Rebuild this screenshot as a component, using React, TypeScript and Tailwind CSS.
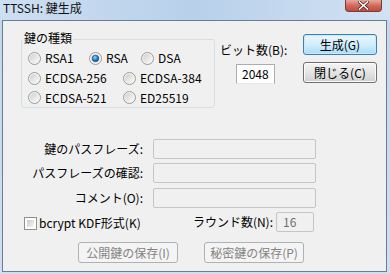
import React from "react";

const FONT = "font-['Noto_Sans_CJK_JP',sans-serif]";

function Radio({ checked }: { checked?: boolean }) {
  return (
    <svg width="13" height="13" viewBox="0 0 13 13" className="shrink-0">
      <defs>
        <linearGradient id="rgbg" x1="0" y1="0" x2="1" y2="1">
          <stop offset="0" stopColor="#cfcfcf" />
          <stop offset="1" stopColor="#fbfbfb" />
        </linearGradient>
        <radialGradient id="rgdot" cx="0.4" cy="0.35" r="0.7">
          <stop offset="0" stopColor="#9fe0ff" />
          <stop offset="0.45" stopColor="#2f8fd8" />
          <stop offset="1" stopColor="#0d3f78" />
        </radialGradient>
      </defs>
      <circle cx="6.5" cy="6.5" r="6" fill="#f4f4f4" stroke="#9a9a9a" strokeWidth="1" />
      <circle cx="6.5" cy="6.5" r="4.5" fill="url(#rgbg)" />
      {checked && <circle cx="6.5" cy="6.5" r="3.3" fill="url(#rgdot)" stroke="#1c4f82" strokeWidth="0.6" />}
    </svg>
  );
}

function Check() {
  return (
    <div className="w-[13px] h-[13px] border border-[#8e8f8f] bg-white p-[2px] shrink-0">
      <div className="w-full h-full bg-gradient-to-br from-[#cbcbcb] to-[#f6f6f6]" />
    </div>
  );
}

function RadioItem({ label, checked, w }: { label: string; checked?: boolean; w: string }) {
  return (
    <div className={`flex items-center gap-[4px] ${w}`}>
      <Radio checked={checked} />
      <span className="leading-[14px]">{label}</span>
    </div>
  );
}

function DisabledInput({ w, text }: { w: string; text?: string }) {
  return (
    <div
      className={`${w} h-[20px] rounded-[2px] border border-[#c5c5c5] bg-[#f0f0f0] flex items-center pl-[6px] text-[#6d6d6d] leading-[14px]`}
    >
      {text}
    </div>
  );
}

export default function App() {
  return (
    <div className={`w-[390px] h-[274px] flex flex-col overflow-hidden bg-gradient-to-b from-[#c3d6ec] to-[#cfdff1] ${FONT} text-[12px] text-black`}>
      {/* Title bar */}
      <div className="h-[20px] flex items-start justify-between bg-gradient-to-r from-[#cddff2] via-[#b8d0ea] to-[#d2e2f3] shrink-0">
        <div className="ml-[3px] mt-[1px] leading-[14px] text-[12px] text-[#111]">TTSSH: 鍵生成</div>
        <div className="mr-[8px] w-[37px] h-[12px] rounded-b-[4px] border border-t-0 border-[#7a3b35] bg-gradient-to-b from-[#e4a89e] via-[#d3685c] to-[#c24a3e] flex items-center justify-center">
          <svg width="11" height="9" viewBox="0 0 11 9">
            <path d="M1.5 1 L9.5 8 M9.5 1 L1.5 8" stroke="#4a2420" strokeWidth="3" strokeLinecap="square" />
            <path d="M1.5 1 L9.5 8 M9.5 1 L1.5 8" stroke="#ffffff" strokeWidth="1.6" strokeLinecap="square" />
          </svg>
        </div>
      </div>

      {/* Client area */}
      <div className="ml-[2px] mr-[3px] h-[252px] border border-[#6b7d92] bg-[#f0f0f0] flex flex-col shrink-0">
        {/* Top section */}
        <div className="flex items-start">
          {/* Group box */}
          <div className="relative ml-[18px] mt-[18px] w-[194px] h-[69px] rounded-[3px] border border-[#d5dfe5] shrink-0">
            <span className="absolute left-[1px] top-[-9px] px-[1px] bg-[#f0f0f0] leading-[14px]">鍵の種類</span>
            <div className="flex flex-col pl-[6px] pt-[8px]">
              <div className="flex h-[20px] items-center">
                <RadioItem label="RSA1" w="w-[61px]" />
                <RadioItem label="RSA" checked w="w-[52px]" />
                <RadioItem label="DSA" w="w-[60px]" />
              </div>
              <div className="flex h-[20px] items-center">
                <RadioItem label="ECDSA-256" w="w-[95px]" />
                <RadioItem label="ECDSA-384" w="w-[90px]" />
              </div>
              <div className="flex h-[19px] items-center">
                <RadioItem label="ECDSA-521" w="w-[95px]" />
                <RadioItem label="ED25519" w="w-[90px]" />
              </div>
            </div>
          </div>

          {/* Bit count */}
          <div className="ml-[5px] mt-[22px] w-[70px] flex flex-col shrink-0">
            <span className="leading-[14px] whitespace-nowrap">ビット数(B):</span>
            <div className="mt-[7px] ml-[16px] w-[39px] h-[20px] border border-[#abadb3] border-b-[#e3e9ef] bg-white flex items-center pl-[5px] leading-[14px]">
              2048
            </div>
          </div>

          {/* Buttons */}
          <div className="ml-[13px] mt-[13px] flex flex-col gap-[7px] shrink-0">
            <button className="w-[74px] h-[21px] rounded-[3px] border border-[#3c7fb1] bg-gradient-to-b from-[#eaf6fd] via-[#d2eefc] to-[#a9dbf6] flex items-center justify-center leading-[14px] shadow-[inset_0_0_0_1px_#c9eafc]">
              生成(G)
            </button>
            <button className="w-[74px] h-[21px] rounded-[3px] border border-[#707070] bg-gradient-to-b from-[#f4f4f4] via-[#e4e4e4] to-[#d0d0d0] flex items-center justify-center leading-[14px] shadow-[inset_0_0_0_1px_#fbfbfb]">
              閉じる(C)
            </button>
          </div>
        </div>

        {/* Passphrase rows */}
        <div className="mt-[31px] flex flex-col">
          <div className="flex items-center h-[20px]">
            <span className="w-[140px] text-right leading-[14px] whitespace-nowrap">鍵のパスフレーズ:</span>
            <div className="ml-[10px]"><DisabledInput w="w-[163px]" /></div>
          </div>
          <div className="flex items-center h-[20px] mt-[4px]">
            <span className="w-[140px] text-right leading-[14px] whitespace-nowrap">パスフレーズの確認:</span>
            <div className="ml-[10px]"><DisabledInput w="w-[163px]" /></div>
          </div>
          <div className="flex items-center h-[20px] mt-[5px]">
            <span className="w-[140px] text-right leading-[14px] whitespace-nowrap">コメント(O):</span>
            <div className="ml-[10px]"><DisabledInput w="w-[163px]" /></div>
          </div>
        </div>

        {/* KDF row */}
        <div className="mt-[4px] flex items-center h-[20px]">
          <div className="ml-[21px] w-[160px] flex items-center gap-[2px]">
            <div className="mt-[3px]"><Check /></div>
            <span className="leading-[14px] mt-[2px] whitespace-nowrap">bcrypt KDF形式(K)</span>
          </div>
          <span className="w-[89px] text-right leading-[14px] whitespace-nowrap">ラウンド数(N):</span>
          <div className="ml-[3px]"><DisabledInput w="w-[38px]" text="16" /></div>
        </div>

        {/* Save buttons */}
        <div className="mt-[10px] flex items-center">
          <button className="ml-[75px] w-[100px] h-[21px] rounded-[3px] border border-[#adb2b5] bg-[#f4f4f4] text-[#838383] flex items-center justify-center leading-[14px]">
            公開鍵の保存(I)
          </button>
          <button className="ml-[26px] w-[100px] h-[21px] rounded-[3px] border border-[#adb2b5] bg-[#f4f4f4] text-[#838383] flex items-center justify-center leading-[14px]">
            秘密鍵の保存(P)
          </button>
        </div>
      </div>
    </div>
  );
}
